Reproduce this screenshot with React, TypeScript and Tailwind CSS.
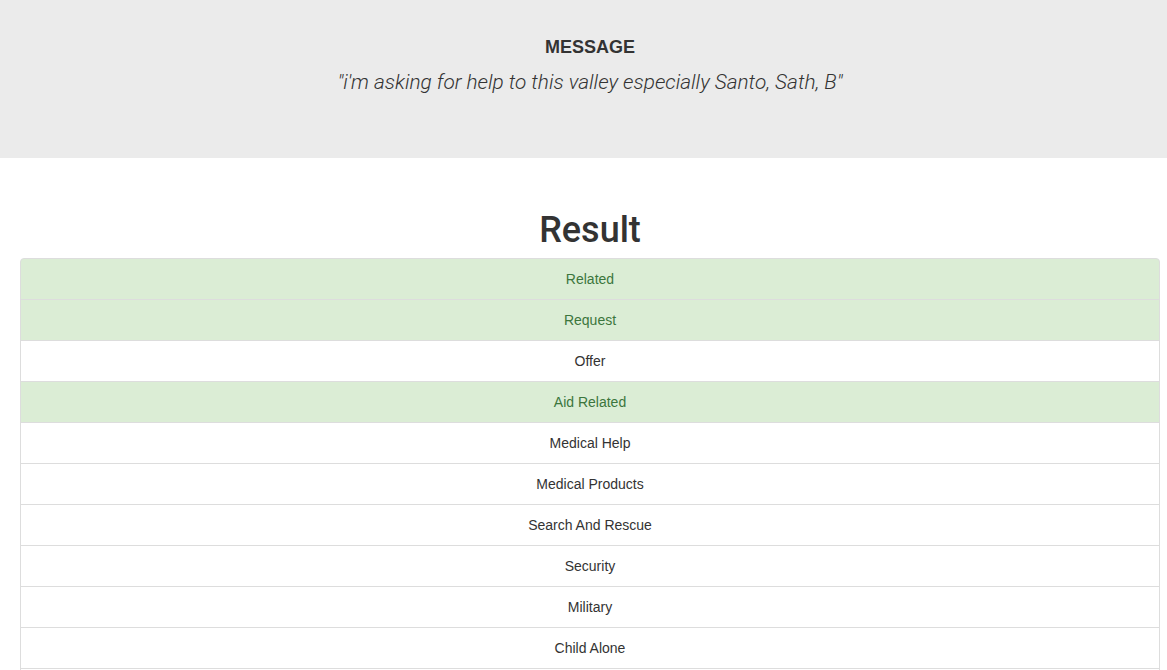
import React from "react";

const rows: { label: string; ok: boolean }[] = [
  { label: "Related", ok: true },
  { label: "Request", ok: true },
  { label: "Offer", ok: false },
  { label: "Aid Related", ok: true },
  { label: "Medical Help", ok: false },
  { label: "Medical Products", ok: false },
  { label: "Search And Rescue", ok: false },
  { label: "Security", ok: false },
  { label: "Military", ok: false },
  { label: "Child Alone", ok: false },
  { label: "Water", ok: false },
  { label: "Food", ok: false },
  { label: "Shelter", ok: false },
];

export default function App() {
  return (
    <div className="min-h-screen bg-white text-[#333]" style={{ fontFamily: '"Liberation Sans", Arial, sans-serif' }}>
      <div className="h-[158px] bg-[#ebebeb] pt-[37px]">
        <div className="ml-[20px] w-[1140px] text-center">
          <h4 className="text-[18px] font-bold leading-[20px] text-[#333]">MESSAGE</h4>
          <p
            className="mt-[11px] text-[20.8px] italic font-light leading-[29px] text-[#333]"
            style={{ fontFamily: 'Roboto, "Liberation Sans", sans-serif' }}
          >
            "i'm asking for help to this valley especially Santo, Sath, B"
          </p>
        </div>
      </div>
      <div className="ml-[20px] w-[1140px] pt-[52px]">
        <h1
          className="text-center text-[36px] font-medium leading-[40px] text-[#333]"
          style={{ fontFamily: 'Roboto, "Liberation Sans", sans-serif' }}
        >
          Result
        </h1>
        <div className="mt-[8px] flex flex-col">
          {rows.map((r, i) => (
            <div
              key={r.label}
              className={
                "border border-[#dddddd] px-[15px] py-[10px] text-center text-[14px] leading-[20px] " +
                (i > 0 ? "-mt-px " : "rounded-t-[4px] ") +
                (i === rows.length - 1 ? "rounded-b-[4px] " : "") +
                (r.ok ? "bg-[#dbedd5] text-[#3c763d]" : "bg-white text-[#333]")
              }
            >
              {r.label}
            </div>
          ))}
        </div>
      </div>
    </div>
  );
}
